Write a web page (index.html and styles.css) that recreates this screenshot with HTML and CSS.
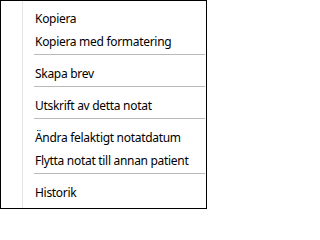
FILE: index.html
```html
<!DOCTYPE html>
<html lang="sv">
<head>
<meta charset="utf-8">
<title>Meny</title>
<link rel="stylesheet" href="styles.css">
</head>
<body>
<div class="menu">
  <div class="item">Kopiera</div>
  <div class="item">Kopiera med formatering</div>
  <div class="sep"></div>
  <div class="item">Skapa brev</div>
  <div class="sep"></div>
  <div class="item">Utskrift av detta notat</div>
  <div class="sep"></div>
  <div class="item">Ändra felaktigt notatdatum</div>
  <div class="item">Flytta notat till annan patient</div>
  <div class="sep"></div>
  <div class="item">Historik</div>
</div>
</body>
</html>
```
FILE: styles.css
```css
html, body {
  margin: 0;
  padding: 0;
  background: #fff;
}
.menu {
  box-sizing: border-box;
  width: 207px;
  height: 209px;
  border: 1px solid #000;
  background: #fff;
  padding: 6px 0 0 0;
  font-family: "Noto Sans", "Open Sans", sans-serif;
  font-size: 12px;
  letter-spacing: -0.3px;
  color: #000;
  position: relative;
}
.menu::before {
  content: "";
  position: absolute;
  left: 21px;
  top: 0;
  bottom: 0;
  width: 1px;
  background: #e6e6e6;
}
.item {
  height: 23px;
  line-height: 23px;
  padding-left: 34px;
  white-space: nowrap;
}
.sep {
  height: 9px;
  box-sizing: border-box;
  padding-top: 1px;
  margin-left: 33px;
  margin-right: 1px;
}
.sep::after {
  content: "";
  display: block;
  height: 1px;
  background: #b9b9b9;
}
```
